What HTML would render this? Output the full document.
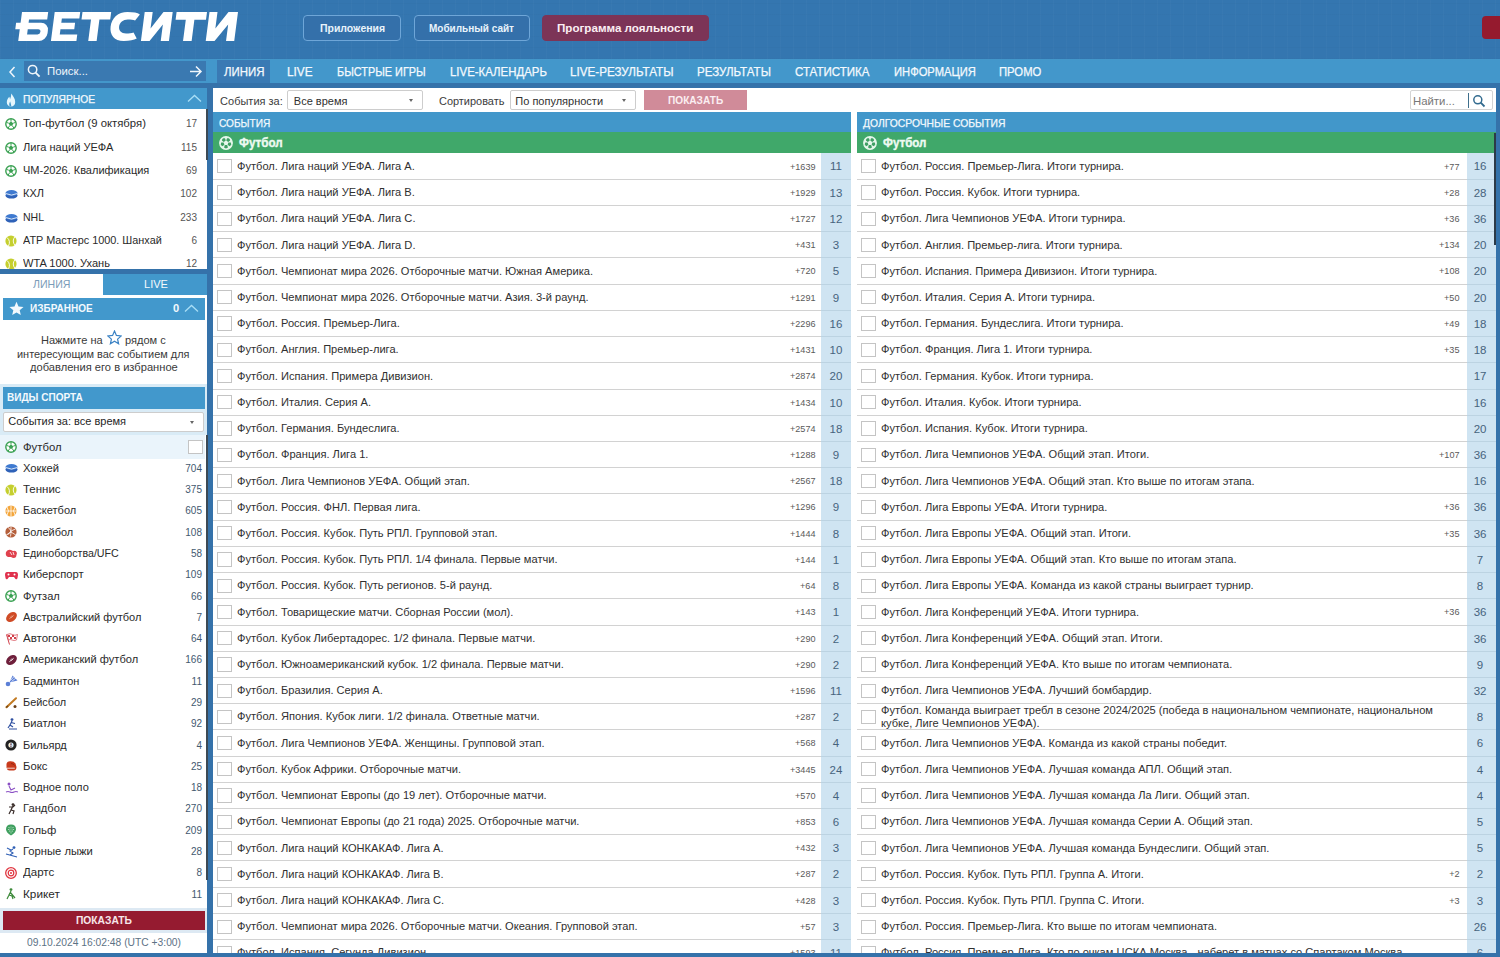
<!DOCTYPE html><html lang="ru"><head><meta charset="utf-8"><title>БЕТСИТИ</title><style>
*{margin:0;padding:0;box-sizing:border-box}
html,body{width:1500px;height:957px;overflow:hidden}
body{position:relative;background:#3572aa;font-family:"Liberation Sans",sans-serif;color:#333}
.a{position:absolute}
.tx{white-space:nowrap;transform-origin:0 50%}
#hdr{left:0;top:0;width:1500px;height:59px;background:#3476b0;background-image:repeating-linear-gradient(90deg,rgba(255,255,255,0.02) 0 1px,transparent 1px 13px),repeating-linear-gradient(0deg,rgba(0,0,0,0.015) 0 1px,transparent 1px 11px)}
.hb{top:15px;height:25.6px;border:1px solid #6ea6d8;border-radius:4px;background:#3470aa}
#nav{left:0;top:59px;width:1500px;height:24px;background:#4397cb}
.sh{background:#4298cc}
.pi{position:absolute;left:0;width:207px;height:23.3px}
.pi svg{position:absolute;left:5px;top:6px}
.pi .n{position:absolute;left:23px;top:0;line-height:23.3px;font-size:11.1px;color:#2a2a2a;white-space:nowrap;transform-origin:0 50%}
.pi .k{position:absolute;right:10px;top:0;line-height:23.3px;font-size:10px;color:#555}
.si{position:absolute;left:0;width:205px;height:21.29px}
.si svg{position:absolute;left:5px;top:4.6px}
.si .n{position:absolute;left:22.7px;top:0;line-height:21.29px;font-size:11.1px;color:#2a2a2a;white-space:nowrap;transform-origin:0 50%}
.si .k{position:absolute;right:3px;top:0;line-height:21.29px;font-size:10px;color:#43596f}
.sel{height:19.8px;border:1px solid #cdcdcd;border-radius:2px;background:#fff}
.sel:after{content:"";position:absolute;right:9px;top:8px;border-left:2.5px solid transparent;border-right:2.5px solid transparent;border-top:3px solid #666}
.col{top:112.4px;height:841px;overflow:hidden;background:#fff}
.ch{height:19.7px;background:#4297ca}
.cg{height:20.7px;background:#40a86a;position:relative}
.cg svg{position:absolute;left:6px;top:4px}
.rows{position:relative;padding-top:0.8px}
.row{position:relative;height:26.23px;border-bottom:1px solid #d2d2d2;white-space:nowrap}
.row .cb{position:absolute;left:4px;top:5.6px;width:14.6px;height:14.2px;border:1px solid #c4c4c4;background:#fff}
.row .t{position:absolute;left:24px;top:-0.7px;line-height:26px;font-size:11.1px;color:#303030}
.row.ml .t{line-height:12.9px;top:0.2px}
.row .p{position:absolute;right:35.5px;top:0;line-height:26px;font-size:9.1px;color:#5a5a5a}
.row .c{position:absolute;right:0;top:0;width:30px;height:25.23px;background:#cfe4f2;text-align:center;line-height:26.5px;font-size:11.5px;color:#46637d}
.row:first-child .c{top:-0.8px;height:26.03px}
.row .c:after{content:'';position:absolute;left:0;right:0;bottom:-1px;height:1px;background:#bcd3e2}
.rc .row .c{width:29.5px;padding-right:2.4px}
.rc .row .p{right:36.5px}
</style></head><body>
<div id="hdr" class="a"></div>
<svg class="a" style="left:0;top:12px;overflow:visible" width="250" height="30" viewBox="0 0 250 30"><g transform="skewX(-7.4)" fill="#fff"><path d="M22 0H48.2V7.6H30V10.8H42.5A7.8 7.8 0 0 1 50.3 18.6V21.2A7.8 7.8 0 0 1 42.5 29H22ZM30 17.2V22.4H40.4A2.6 2.6 0 0 0 40.4 17.2Z" fill-rule="evenodd"/><rect x="17.5" y="10.8" width="10" height="6.4"/><path d="M54.7 0H80.2V6.4H62.7V10.8H76.5V17.2H62.7V22.6H80.2V29H54.7Z"/><path d="M82.5 0H111.2V7.6H100.4V29H92V7.6H82.5Z"/><path d="M140.2 2.4C137.5 0.8 133.5 0 127.5 0C118 0 112.5 6 112.5 14.5C112.5 23 118 29 127.5 29C133.5 29 137.5 28.2 140.2 26.6L136.2 20.4C134.2 21.1 132 21.4 128.8 21.4C124 21.4 121 18.5 121 14.5C121 10.5 124 7.6 128.8 7.6C132 7.6 134.2 7.9 136.2 8.6Z"/><path d="M144.7 0H152.7V16.5L163.5 0H172.7V29H164.5V12.5L153.3 29H144.7Z"/><path d="M176.6 0H207V7.8H195.4V29H186.8V7.8H176.6Z"/><path d="M209.5 0H217.5V16.5L228.5 0H238V29H229.8V12.5L218.3 29H209.5Z"/></g></svg>
<div class="a hb" style="left:303px;width:98px"></div>
<div class="a hb" style="left:413.5px;width:116.5px"></div>
<div class="a hb" style="left:542px;width:166.5px;background:#7c3457;border-color:#7c3457"></div>
<div class="a tx" style="left:319.50px;top:22.77px;font-size:11.5px;line-height:11.5px;color:#e9f3fb;font-weight:bold;transform:scaleX(0.9103);">Приложения</div>
<div class="a tx" style="left:428.50px;top:22.93px;font-size:11.3px;line-height:11.3px;color:#e9f3fb;font-weight:bold;transform:scaleX(0.8846);">Мобильный сайт</div>
<div class="a tx" style="left:557.00px;top:22.67px;font-size:11.5px;line-height:11.5px;color:#fbeef3;font-weight:bold;transform:scaleX(1.0095);">Программа лояльности</div>
<div class="a" style="left:1482px;top:16.3px;width:30px;height:23.2px;background:#951a2e;border-radius:4px"></div>
<div id="nav" class="a"></div>
<div class="a" style="left:217.3px;top:60px;width:52.3px;height:23px;background:#3a7ab4"></div>
<div class="a" style="left:24px;top:61px;width:182px;height:19.7px;background:#3a79b1"></div>
<svg class="a" style="left:7.5px;top:65.5px" width="9" height="12" viewBox="0 0 9 12"><path d="M6.5 1L2 6l4.5 5" stroke="#f0f6fb" stroke-width="1.5" fill="none"/></svg>
<svg class="a" style="left:27px;top:64px" width="14" height="14" viewBox="0 0 14 14"><circle cx="5.6" cy="5.6" r="4.2" stroke="#f0f6fb" stroke-width="1.5" fill="none"/><path d="M8.6 8.6l4 4" stroke="#f0f6fb" stroke-width="1.8"/></svg>
<div class="a tx" style="left:47.20px;top:65.87px;font-size:11.5px;line-height:11.5px;color:#f0f6fb;font-weight:normal;transform:scaleX(0.9891);">Поиск...</div>
<svg class="a" style="left:189px;top:65px" width="14" height="13" viewBox="0 0 14 13"><path d="M1 6.5h11M7 1.5l5 5-5 5" stroke="#f0f6fb" stroke-width="1.5" fill="none"/></svg>
<div class="a tx" style="left:223.50px;top:65.84px;font-size:12px;line-height:12px;color:#f4f9fd;font-weight:normal;transform:scaleX(0.9536);-webkit-text-stroke:0.25px #f4f9fd;">ЛИНИЯ</div>
<div class="a tx" style="left:287.10px;top:65.84px;font-size:12px;line-height:12px;color:#f4f9fd;font-weight:normal;transform:scaleX(0.9840);-webkit-text-stroke:0.25px #f4f9fd;">LIVE</div>
<div class="a tx" style="left:337.00px;top:65.84px;font-size:12px;line-height:12px;color:#f4f9fd;font-weight:normal;transform:scaleX(0.9068);-webkit-text-stroke:0.25px #f4f9fd;">БЫСТРЫЕ ИГРЫ</div>
<div class="a tx" style="left:449.50px;top:65.84px;font-size:12px;line-height:12px;color:#f4f9fd;font-weight:normal;transform:scaleX(0.9516);-webkit-text-stroke:0.25px #f4f9fd;">LIVE-КАЛЕНДАРЬ</div>
<div class="a tx" style="left:570.20px;top:65.84px;font-size:12px;line-height:12px;color:#f4f9fd;font-weight:normal;transform:scaleX(0.9710);-webkit-text-stroke:0.25px #f4f9fd;">LIVE-РЕЗУЛЬТАТЫ</div>
<div class="a tx" style="left:697.20px;top:65.84px;font-size:12px;line-height:12px;color:#f4f9fd;font-weight:normal;transform:scaleX(0.9648);-webkit-text-stroke:0.25px #f4f9fd;">РЕЗУЛЬТАТЫ</div>
<div class="a tx" style="left:795.20px;top:65.84px;font-size:12px;line-height:12px;color:#f4f9fd;font-weight:normal;transform:scaleX(0.9621);-webkit-text-stroke:0.25px #f4f9fd;">СТАТИСТИКА</div>
<div class="a tx" style="left:893.50px;top:65.84px;font-size:12px;line-height:12px;color:#f4f9fd;font-weight:normal;transform:scaleX(0.9328);-webkit-text-stroke:0.25px #f4f9fd;">ИНФОРМАЦИЯ</div>
<div class="a tx" style="left:998.80px;top:65.84px;font-size:12px;line-height:12px;color:#f4f9fd;font-weight:normal;transform:scaleX(0.9393);-webkit-text-stroke:0.25px #f4f9fd;">ПРОМО</div>
<div class="a" style="left:0;top:88px;width:207px;height:865px;background:#fff"></div>
<div class="a sh" style="left:0;top:88px;width:207px;height:21.3px"></div>
<svg class="a" style="left:6.2px;top:92.6px" width="10" height="14" viewBox="0 0 10 14"><path d="M5.3 0.5C7 3 9.2 5.5 9.2 9C9.2 11.8 7.5 13.5 5 13.5C2.5 13.5 0.8 11.8 0.8 9.2C0.8 6.8 2.2 5.2 3.3 3.8C3.8 5 4 5.8 4 6.5C4.8 4.5 5.3 2.5 5.3 0.5Z" fill="#e6f7fd"/><path d="M3.7 13.3C2.9 12 3.1 10 4.2 8.4C4.6 10 5.3 11.5 5.3 13.4Z" fill="#4298cc"/></svg>
<div class="a tx" style="left:23.00px;top:94.53px;font-size:10px;line-height:10px;color:#f3f9fd;font-weight:normal;transform:scaleX(1.0240);-webkit-text-stroke:0.25px #f3f9fd;">ПОПУЛЯРНОЕ</div>
<svg class="a" style="left:187.3px;top:94.3px" width="15" height="9" viewBox="0 0 15 9"><path d="M1 7.5L7.5 1.5 14 7.5" stroke="#a8def6" stroke-width="1.3" fill="none"/></svg>
<div class="pi" style="top:112.30px"><svg width="12" height="12" viewBox="0 0 12 12"><circle cx="6" cy="6" r="5.2" fill="#fff" stroke="#3aa152" stroke-width="1.4"/><path d="M6 3.6L8.2 5.2 7.4 7.8H4.6L3.8 5.2Z" fill="#3aa152"/><path d="M6 1v2.6M8.2 5.2l2.4-.8M7.4 7.8l1.4 2.2M4.6 7.8l-1.4 2.2M3.8 5.2l-2.4-.8" stroke="#3aa152" stroke-width="1"/></svg><span class="n" style="transform:scaleX(1.0197)">Топ-футбол (9 октября)</span><span class="k">17</span></div>
<div class="pi" style="top:135.60px"><svg width="12" height="12" viewBox="0 0 12 12"><circle cx="6" cy="6" r="5.2" fill="#fff" stroke="#3aa152" stroke-width="1.4"/><path d="M6 3.6L8.2 5.2 7.4 7.8H4.6L3.8 5.2Z" fill="#3aa152"/><path d="M6 1v2.6M8.2 5.2l2.4-.8M7.4 7.8l1.4 2.2M4.6 7.8l-1.4 2.2M3.8 5.2l-2.4-.8" stroke="#3aa152" stroke-width="1"/></svg><span class="n" style="transform:scaleX(0.9956)">Лига наций УЕФА</span><span class="k">115</span></div>
<div class="pi" style="top:158.90px"><svg width="12" height="12" viewBox="0 0 12 12"><circle cx="6" cy="6" r="5.2" fill="#fff" stroke="#3aa152" stroke-width="1.4"/><path d="M6 3.6L8.2 5.2 7.4 7.8H4.6L3.8 5.2Z" fill="#3aa152"/><path d="M6 1v2.6M8.2 5.2l2.4-.8M7.4 7.8l1.4 2.2M4.6 7.8l-1.4 2.2M3.8 5.2l-2.4-.8" stroke="#3aa152" stroke-width="1"/></svg><span class="n" style="transform:scaleX(0.9913)">ЧМ-2026. Квалификация</span><span class="k">69</span></div>
<div class="pi" style="top:182.20px"><svg width="13" height="12" viewBox="0 0 13 12"><ellipse cx="6.5" cy="7.4" rx="6" ry="3.2" fill="#2f62b8"/><ellipse cx="6.5" cy="5" rx="6" ry="3" fill="#3f7ad0"/><path d="M1 5.6q5.5 3 11 0" stroke="#fff" stroke-width=".8" fill="none"/></svg><span class="n" style="transform:scaleX(0.9879)">КХЛ</span><span class="k">102</span></div>
<div class="pi" style="top:205.50px"><svg width="13" height="12" viewBox="0 0 13 12"><ellipse cx="6.5" cy="7.4" rx="6" ry="3.2" fill="#2f62b8"/><ellipse cx="6.5" cy="5" rx="6" ry="3" fill="#3f7ad0"/><path d="M1 5.6q5.5 3 11 0" stroke="#fff" stroke-width=".8" fill="none"/></svg><span class="n" style="transform:scaleX(0.9500)">NHL</span><span class="k">233</span></div>
<div class="pi" style="top:228.80px"><svg width="12" height="12" viewBox="0 0 12 12"><circle cx="6" cy="6" r="5.6" fill="#c5cf2e"/><path d="M2 2.5q4 3.5 1.5 8.5M10 1.5q-3.5 4.5 0 9" stroke="#fff" stroke-width=".9" fill="none"/></svg><span class="n" style="transform:scaleX(0.9792)">ATP Мастерс 1000. Шанхай</span><span class="k">6</span></div>
<div class="pi" style="top:252.10px"><svg width="12" height="12" viewBox="0 0 12 12"><circle cx="6" cy="6" r="5.6" fill="#c5cf2e"/><path d="M2 2.5q4 3.5 1.5 8.5M10 1.5q-3.5 4.5 0 9" stroke="#fff" stroke-width=".9" fill="none"/></svg><span class="n" style="transform:scaleX(0.9978)">WTA 1000. Ухань</span><span class="k">12</span></div>
<div class="a" style="left:205.5px;top:109px;width:2px;height:51px;background:#3d4a55"></div>
<div class="a" style="left:0;top:268.6px;width:207px;height:5px;background:#3572aa"></div>
<div class="a" style="left:103.2px;top:273.6px;width:104px;height:21px;background:#4298cc"></div>
<div class="a tx" style="left:32.50px;top:278.86px;font-size:10.8px;line-height:10.8px;color:#7a9cb8;font-weight:normal;transform:scaleX(0.9790);">ЛИНИЯ</div>
<div class="a tx" style="left:143.50px;top:278.86px;font-size:10.8px;line-height:10.8px;color:#f5fafd;font-weight:normal;transform:scaleX(1.0204);">LIVE</div>
<div class="a sh" style="left:3px;top:298px;width:201.5px;height:21.5px"></div>
<svg class="a" style="left:9px;top:301px" width="15" height="15" viewBox="0 0 15 15"><path d="M7.5 0.8l2 4.6 5 .5-3.8 3.3 1.1 4.9-4.3-2.6-4.3 2.6 1.1-4.9L.5 5.9l5-.5Z" fill="#f3f9fd"/></svg>
<div class="a tx" style="left:29.50px;top:303.16px;font-size:10.8px;line-height:10.8px;color:#f3f9fd;font-weight:bold;transform:scaleX(0.9270);">ИЗБРАННОЕ</div>
<div class="a tx" style="left:173.20px;top:303.16px;font-size:10.8px;line-height:10.8px;color:#f3f9fd;font-weight:bold;transform:scaleX(1.0306);">0</div>
<svg class="a" style="left:184px;top:303.8px" width="15" height="9" viewBox="0 0 15 9"><path d="M1 7.5L7.5 1.5 14 7.5" stroke="#a8def6" stroke-width="1.3" fill="none"/></svg>
<div class="a tx" style="left:41.20px;top:334.77px;font-size:10.9px;line-height:10.9px;color:#3a3a3a;font-weight:normal;transform:scaleX(1.0146);">Нажмите на</div>
<svg class="a" style="left:107px;top:329.5px" width="15" height="15" viewBox="0 0 15 15"><path d="M7.5 1l1.9 4.4 4.8.5-3.6 3.2 1 4.7-4.1-2.5-4.1 2.5 1-4.7L.8 5.9l4.8-.5Z" fill="none" stroke="#3a82c4" stroke-width="1.2"/></svg>
<div class="a tx" style="left:124.80px;top:334.77px;font-size:10.9px;line-height:10.9px;color:#3a3a3a;font-weight:normal;transform:scaleX(1.0148);">рядом с</div>
<div class="a tx" style="left:17.10px;top:348.97px;font-size:10.9px;line-height:10.9px;color:#3a3a3a;font-weight:normal;transform:scaleX(1.0035);">интересующим вас событием для</div>
<div class="a tx" style="left:29.80px;top:361.67px;font-size:10.9px;line-height:10.9px;color:#3a3a3a;font-weight:normal;transform:scaleX(1.0224);">добавления его в избранное</div>
<div class="a" style="left:0;top:384px;width:207px;height:50.8px;background:#d9ebf6"></div>
<div class="a sh" style="left:3px;top:387px;width:201.5px;height:21.5px"></div>
<div class="a tx" style="left:6.50px;top:392.06px;font-size:10.8px;line-height:10.8px;color:#f3f9fd;font-weight:bold;transform:scaleX(0.9295);">ВИДЫ СПОРТА</div>
<div class="a sel" style="left:3.2px;top:412px;width:201.3px;height:19.5px"></div>
<div class="a tx" style="left:8.30px;top:415.99px;font-size:11px;line-height:11px;color:#262626;font-weight:normal;">События за: все время</div>
<div class="a" style="left:0;top:434.8px;width:205px;height:24.5px;background:#eaf4fb"></div>
<div class="si" style="top:436.50px"><svg width="12" height="12" viewBox="0 0 12 12"><circle cx="6" cy="6" r="5.2" fill="#fff" stroke="#3aa152" stroke-width="1.4"/><path d="M6 3.6L8.2 5.2 7.4 7.8H4.6L3.8 5.2Z" fill="#3aa152"/><path d="M6 1v2.6M8.2 5.2l2.4-.8M7.4 7.8l1.4 2.2M4.6 7.8l-1.4 2.2M3.8 5.2l-2.4-.8" stroke="#3aa152" stroke-width="1"/></svg><span class="n" style="transform:scaleX(1.0204)">Футбол</span><span class="k"></span></div>
<div class="si" style="top:457.79px"><svg width="13" height="12" viewBox="0 0 13 12"><ellipse cx="6.5" cy="7.4" rx="6" ry="3.2" fill="#2f62b8"/><ellipse cx="6.5" cy="5" rx="6" ry="3" fill="#3f7ad0"/><path d="M1 5.6q5.5 3 11 0" stroke="#fff" stroke-width=".8" fill="none"/></svg><span class="n" style="transform:scaleX(1.0124)">Хоккей</span><span class="k">704</span></div>
<div class="si" style="top:479.08px"><svg width="12" height="12" viewBox="0 0 12 12"><circle cx="6" cy="6" r="5.6" fill="#c5cf2e"/><path d="M2 2.5q4 3.5 1.5 8.5M10 1.5q-3.5 4.5 0 9" stroke="#fff" stroke-width=".9" fill="none"/></svg><span class="n" style="transform:scaleX(1.0350)">Теннис</span><span class="k">375</span></div>
<div class="si" style="top:500.37px"><svg width="12" height="12" viewBox="0 0 12 12"><circle cx="6" cy="6" r="5.6" fill="#f3a53a"/><path d="M6 .5v11M.5 6h11M2 2q3 4 0 8M10 2q-3 4 0 8" stroke="#fff" stroke-width=".8" fill="none"/></svg><span class="n" style="transform:scaleX(0.9921)">Баскетбол</span><span class="k">605</span></div>
<div class="si" style="top:521.66px"><svg width="12" height="12" viewBox="0 0 12 12"><circle cx="6" cy="6" r="5.6" fill="#b5603c"/><path d="M6 6L6 .5M6 6l4.8 3M6 6L1.2 9M3 1.5q4 2 2.5 9M10.5 3q-4 .5-8 6" stroke="#fff" stroke-width=".8" fill="none"/></svg><span class="n" style="transform:scaleX(0.9839)">Волейбол</span><span class="k">108</span></div>
<div class="si" style="top:542.95px"><svg width="13" height="12" viewBox="0 0 13 12"><path d="M1 4q2-3 5-2l2 1q3-1 4 2l-1 4q-2 2-5 0L3 9Q0 8 1 4Z" fill="#e0424e"/><path d="M5 4l2 3M8 4l1 3" stroke="#fff" stroke-width=".8"/></svg><span class="n" style="transform:scaleX(0.9627)">Единоборства/UFC</span><span class="k">58</span></div>
<div class="si" style="top:564.24px"><svg width="13" height="12" viewBox="0 0 13 12"><path d="M2 3h9q2 0 2 3l-.5 3q-.5 2-2 1L9 8H4L2.5 10Q1 11 .5 9L0 6q0-3 2-3Z" fill="#e0314d"/><circle cx="3.5" cy="5.5" r="1" fill="#fff"/><circle cx="9.5" cy="5.5" r="1" fill="#fff"/></svg><span class="n" style="transform:scaleX(1.0122)">Киберспорт</span><span class="k">109</span></div>
<div class="si" style="top:585.53px"><svg width="12" height="12" viewBox="0 0 12 12"><circle cx="6" cy="6" r="5.2" fill="#fff" stroke="#3aa152" stroke-width="1.4"/><path d="M6 3.6L8.2 5.2 7.4 7.8H4.6L3.8 5.2Z" fill="#3aa152"/><path d="M6 1v2.6M8.2 5.2l2.4-.8M7.4 7.8l1.4 2.2M4.6 7.8l-1.4 2.2M3.8 5.2l-2.4-.8" stroke="#3aa152" stroke-width="1"/></svg><span class="n" style="transform:scaleX(1.0001)">Футзал</span><span class="k">66</span></div>
<div class="si" style="top:606.82px"><svg width="13" height="12" viewBox="0 0 13 12"><ellipse cx="6.5" cy="6" rx="6" ry="4.3" transform="rotate(-40 6.5 6)" fill="#cf4b26"/><path d="M4.3 7.8l4.4-3.6M5.4 5.6l1.2 1.3M6.6 4.7l1.2 1.3" stroke="#f2c0a8" stroke-width=".7"/></svg><span class="n" style="transform:scaleX(0.9927)">Австралийский футбол</span><span class="k">7</span></div>
<div class="si" style="top:628.11px"><svg width="13" height="12" viewBox="0 0 13 12"><path d="M1.5 1.5L4.5 11.5" stroke="#d2414c" stroke-width="1"/><path d="M2 1.5Q5 0 7.5 1.5T12.5 1.5L11.5 7Q9 8 7 7T3.5 7Z" fill="#fff" stroke="#d2414c" stroke-width=".7"/><path d="M3 2h2v2H3zM7 2h2v2H7zM5 4h2v2H5zM9 4h2v2H9z" fill="#d2414c"/></svg><span class="n" style="transform:scaleX(1.0365)">Автогонки</span><span class="k">64</span></div>
<div class="si" style="top:649.40px"><svg width="13" height="12" viewBox="0 0 13 12"><ellipse cx="6.5" cy="6" rx="6" ry="4.3" transform="rotate(-40 6.5 6)" fill="#6e1f3b"/><path d="M4.3 7.8l4.4-3.6M5.4 5.6l1.2 1.3M6.6 4.7l1.2 1.3" stroke="#fff" stroke-width=".8"/></svg><span class="n" style="transform:scaleX(0.9998)">Американский футбол</span><span class="k">166</span></div>
<div class="si" style="top:670.69px"><svg width="13" height="12" viewBox="0 0 13 12"><path d="M4.5 7.5L7.5 0.5 12.5 5.5Z" fill="#5b7fd6"/><path d="M5.5 5.5L9 1.6M6.5 6.5L11 3" stroke="#fff" stroke-width=".7"/><circle cx="3" cy="9" r="2.3" fill="#5b7fd6"/></svg><span class="n" style="transform:scaleX(0.9870)">Бадминтон</span><span class="k">11</span></div>
<div class="si" style="top:691.98px"><svg width="13" height="12" viewBox="0 0 13 12"><path d="M1.5 10.2L11 1.2" stroke="#c27a22" stroke-width="2" stroke-linecap="round"/><path d="M1.2 10.5L3 8.8" stroke="#7a4a14" stroke-width="1.6"/><circle cx="10" cy="9.6" r="1.5" fill="#6b3f16"/></svg><span class="n" style="transform:scaleX(0.9829)">Бейсбол</span><span class="k">29</span></div>
<div class="si" style="top:713.27px"><svg width="13" height="12" viewBox="0 0 13 12"><circle cx="7" cy="1.6" r="1.4" fill="#2d4fa0"/><path d="M7 3L5 7l3 2M6 4.5l4 1M4 11h8M5 7l-2 3" stroke="#2d4fa0" stroke-width="1.2" fill="none"/></svg><span class="n" style="transform:scaleX(1.0014)">Биатлон</span><span class="k">92</span></div>
<div class="si" style="top:734.56px"><svg width="12" height="12" viewBox="0 0 12 12"><circle cx="6" cy="6" r="5.6" fill="#222"/><circle cx="6" cy="6" r="2.6" fill="#fff"/><text x="6" y="8" font-size="4.5" text-anchor="middle" fill="#222" font-family="Liberation Sans">8</text></svg><span class="n" style="transform:scaleX(0.9923)">Бильярд</span><span class="k">4</span></div>
<div class="si" style="top:755.85px"><svg width="13" height="12" viewBox="0 0 13 12"><path d="M1.5 5.5Q1 1.5 5 1.2T10.5 3.5L11.5 7Q11.5 10 9 10.5H4.5Q1.8 10.2 1.5 7.5Z" fill="#c83a1c"/><path d="M2 8.2H9.8" stroke="#fff" stroke-width=".8"/><path d="M6 3.5Q8.5 3.5 9.5 5.5" stroke="#8e240f" stroke-width=".8" fill="none"/></svg><span class="n" style="transform:scaleX(1.0173)">Бокс</span><span class="k">25</span></div>
<div class="si" style="top:777.14px"><svg width="13" height="12" viewBox="0 0 13 12"><circle cx="4" cy="2" r="1.5" fill="#8a4fc4"/><path d="M4 4l2 4 4-2M1 10q2-1 4 0t4 0 4 0" stroke="#8a4fc4" stroke-width="1.1" fill="none"/></svg><span class="n" style="transform:scaleX(0.9960)">Водное поло</span><span class="k">18</span></div>
<div class="si" style="top:798.43px"><svg width="13" height="12" viewBox="0 0 13 12"><circle cx="8" cy="1.6" r="1.4" fill="#3a2d2a"/><path d="M8 3L6 7l3 1-1 3M6 7l-2 4M4 4h4l2-2" stroke="#3a2d2a" stroke-width="1.2" fill="none"/></svg><span class="n" style="transform:scaleX(1.0065)">Гандбол</span><span class="k">270</span></div>
<div class="si" style="top:819.72px"><svg width="12" height="12" viewBox="0 0 12 12"><path d="M6 .6Q11 .8 11 5.3 11 8.5 6 11.6 1 8.5 1 5.3 1 .8 6 .6Z" fill="#3f9f5f"/><g fill="#bfe6cb"><circle cx="4" cy="3.5" r=".6"/><circle cx="6" cy="3" r=".6"/><circle cx="8" cy="3.5" r=".6"/><circle cx="3.5" cy="5.5" r=".6"/><circle cx="5" cy="5" r=".6"/><circle cx="7" cy="5" r=".6"/><circle cx="8.5" cy="5.5" r=".6"/><circle cx="4.5" cy="7" r=".6"/><circle cx="6" cy="7" r=".6"/><circle cx="7.5" cy="7" r=".6"/><circle cx="6" cy="8.8" r=".6"/></g></svg><span class="n" style="transform:scaleX(1.0191)">Гольф</span><span class="k">209</span></div>
<div class="si" style="top:841.01px"><svg width="13" height="12" viewBox="0 0 13 12"><circle cx="9" cy="1.6" r="1.4" fill="#2f5fb5"/><path d="M8 3L5 5l3 2-3 2M1 8l11 3M2 2l4 2" stroke="#2f5fb5" stroke-width="1.1" fill="none"/></svg><span class="n" style="transform:scaleX(1.0111)">Горные лыжи</span><span class="k">28</span></div>
<div class="si" style="top:862.30px"><svg width="12" height="12" viewBox="0 0 12 12"><circle cx="6" cy="6" r="5.3" fill="none" stroke="#e0353f" stroke-width="1.3"/><circle cx="6" cy="6" r="2.8" fill="none" stroke="#e0353f" stroke-width="1.2"/><circle cx="6" cy="6" r="1" fill="#e0353f"/></svg><span class="n" style="transform:scaleX(1.0390)">Дартс</span><span class="k">8</span></div>
<div class="si" style="top:883.59px"><svg width="13" height="12" viewBox="0 0 13 12"><circle cx="6" cy="1.6" r="1.4" fill="#3d8a3a"/><path d="M6 3L4 7l3 1 1 3M4 7l-2 4M5 4l5 6" stroke="#3d8a3a" stroke-width="1.2" fill="none"/></svg><span class="n" style="transform:scaleX(1.0600)">Крикет</span><span class="k">11</span></div>
<div class="a" style="left:188.4px;top:440.2px;width:14.2px;height:14.2px;border:1px solid #c4c4c4;background:#fff"></div>
<div class="a" style="left:205.5px;top:435px;width:2px;height:445px;background:#3d4a55"></div>
<div class="a" style="left:0;top:908px;width:207px;height:25px;background:#dde9f3"></div>
<div class="a" style="left:3px;top:911.3px;width:201.7px;height:18.6px;background:#951b30"></div>
<div class="a tx" style="left:75.50px;top:915.47px;font-size:11.5px;line-height:11.5px;color:#f6e6ea;font-weight:bold;transform:scaleX(0.8922);">ПОКАЗАТЬ</div>
<div class="a tx" style="left:26.70px;top:938.07px;font-size:10.2px;line-height:10.2px;color:#5d7285;font-weight:normal;transform:scaleX(1.0089);">09.10.2024 16:02:48 (UTC +3:00)</div>
<div class="a" style="left:213px;top:88px;width:1283px;height:865px;background:#fff"></div>
<div class="a tx" style="left:220.10px;top:95.79px;font-size:11px;line-height:11px;color:#3c3c3c;font-weight:normal;">События за:</div>
<div class="a sel" style="left:287.3px;top:90.4px;width:135.4px"></div>
<div class="a tx" style="left:293.80px;top:95.79px;font-size:11px;line-height:11px;color:#303030;font-weight:normal;">Все время</div>
<div class="a tx" style="left:438.70px;top:95.79px;font-size:11px;line-height:11px;color:#3c3c3c;font-weight:normal;transform:scaleX(0.9949);">Сортировать</div>
<div class="a sel" style="left:509.6px;top:90.4px;width:126.1px"></div>
<div class="a tx" style="left:515.30px;top:95.79px;font-size:11px;line-height:11px;color:#303030;font-weight:normal;">По популярности</div>
<div class="a" style="left:644px;top:90.4px;width:102.8px;height:19.4px;background:#d08b99"></div>
<div class="a tx" style="left:667.80px;top:95.39px;font-size:11px;line-height:11px;color:#fbeef1;font-weight:bold;transform:scaleX(0.9193);">ПОКАЗАТЬ</div>
<div class="a" style="left:1410px;top:90.3px;width:82.6px;height:20px;border:1px solid #d4d4d4;border-radius:2px;background:#fff"></div>
<div class="a tx" style="left:1413.40px;top:95.53px;font-size:11.3px;line-height:11.3px;color:#777;font-weight:normal;transform:scaleX(1.0059);">Найти...</div>
<div class="a" style="left:1468px;top:93px;width:1.2px;height:15px;background:#3f6f8c"></div>
<svg class="a" style="left:1472px;top:93.5px" width="14" height="14" viewBox="0 0 14 14"><circle cx="5.8" cy="5.8" r="4" stroke="#336b8f" stroke-width="1.5" fill="none"/><path d="M8.7 8.7l3.8 3.8" stroke="#336b8f" stroke-width="1.8"/></svg>
<div class="a col" style="left:213px;width:638px"><div class="ch"></div><div class="cg"><svg width="14" height="14" viewBox="0 0 14 14"><circle cx="7" cy="7" r="6.3" fill="#e6f7ec"/><path d="M10.41 2.31L11.15 4.60L9.20 6.02L7.25 4.60L8.00 2.31ZM12.52 8.79L10.57 10.21L8.62 8.79L9.36 6.50L11.77 6.50ZM7.00 12.80L5.05 11.38L5.80 9.09L8.20 9.09L8.95 11.38ZM1.48 8.79L2.23 6.50L4.64 6.50L5.38 8.79L3.43 10.21ZM3.59 2.31L6.00 2.31L6.75 4.60L4.80 6.02L2.85 4.60Z" fill="#3f9f64"/><circle cx="7" cy="7" r="6.3" fill="none" stroke="#e6f7ec" stroke-width="1.2"/></svg></div><div class="rows"><div class="row"><i class="cb"></i><span class="t">Футбол. Лига наций УЕФА. Лига А.</span><span class="p">+1639</span><span class="c">11</span></div>
<div class="row"><i class="cb"></i><span class="t">Футбол. Лига наций УЕФА. Лига B.</span><span class="p">+1929</span><span class="c">13</span></div>
<div class="row"><i class="cb"></i><span class="t">Футбол. Лига наций УЕФА. Лига C.</span><span class="p">+1727</span><span class="c">12</span></div>
<div class="row"><i class="cb"></i><span class="t">Футбол. Лига наций УЕФА. Лига D.</span><span class="p">+431</span><span class="c">3</span></div>
<div class="row"><i class="cb"></i><span class="t">Футбол. Чемпионат мира 2026. Отборочные матчи. Южная Америка.</span><span class="p">+720</span><span class="c">5</span></div>
<div class="row"><i class="cb"></i><span class="t">Футбол. Чемпионат мира 2026. Отборочные матчи. Азия. 3-й раунд.</span><span class="p">+1291</span><span class="c">9</span></div>
<div class="row"><i class="cb"></i><span class="t">Футбол. Россия. Премьер-Лига.</span><span class="p">+2296</span><span class="c">16</span></div>
<div class="row"><i class="cb"></i><span class="t">Футбол. Англия. Премьер-лига.</span><span class="p">+1431</span><span class="c">10</span></div>
<div class="row"><i class="cb"></i><span class="t">Футбол. Испания. Примера Дивизион.</span><span class="p">+2874</span><span class="c">20</span></div>
<div class="row"><i class="cb"></i><span class="t">Футбол. Италия. Серия А.</span><span class="p">+1434</span><span class="c">10</span></div>
<div class="row"><i class="cb"></i><span class="t">Футбол. Германия. Бундеслига.</span><span class="p">+2574</span><span class="c">18</span></div>
<div class="row"><i class="cb"></i><span class="t">Футбол. Франция. Лига 1.</span><span class="p">+1288</span><span class="c">9</span></div>
<div class="row"><i class="cb"></i><span class="t">Футбол. Лига Чемпионов УЕФА. Общий этап.</span><span class="p">+2567</span><span class="c">18</span></div>
<div class="row"><i class="cb"></i><span class="t">Футбол. Россия. ФНЛ. Первая лига.</span><span class="p">+1296</span><span class="c">9</span></div>
<div class="row"><i class="cb"></i><span class="t">Футбол. Россия. Кубок. Путь РПЛ. Групповой этап.</span><span class="p">+1444</span><span class="c">8</span></div>
<div class="row"><i class="cb"></i><span class="t">Футбол. Россия. Кубок. Путь РПЛ. 1/4 финала. Первые матчи.</span><span class="p">+144</span><span class="c">1</span></div>
<div class="row"><i class="cb"></i><span class="t">Футбол. Россия. Кубок. Путь регионов. 5-й раунд.</span><span class="p">+64</span><span class="c">8</span></div>
<div class="row"><i class="cb"></i><span class="t">Футбол. Товарищеские матчи. Сборная России (мол).</span><span class="p">+143</span><span class="c">1</span></div>
<div class="row"><i class="cb"></i><span class="t">Футбол. Кубок Либертадорес. 1/2 финала. Первые матчи.</span><span class="p">+290</span><span class="c">2</span></div>
<div class="row"><i class="cb"></i><span class="t">Футбол. Южноамериканский кубок. 1/2 финала. Первые матчи.</span><span class="p">+290</span><span class="c">2</span></div>
<div class="row"><i class="cb"></i><span class="t">Футбол. Бразилия. Серия А.</span><span class="p">+1596</span><span class="c">11</span></div>
<div class="row"><i class="cb"></i><span class="t">Футбол. Япония. Кубок лиги. 1/2 финала. Ответные матчи.</span><span class="p">+287</span><span class="c">2</span></div>
<div class="row"><i class="cb"></i><span class="t">Футбол. Лига Чемпионов УЕФА. Женщины. Групповой этап.</span><span class="p">+568</span><span class="c">4</span></div>
<div class="row"><i class="cb"></i><span class="t">Футбол. Кубок Африки. Отборочные матчи.</span><span class="p">+3445</span><span class="c">24</span></div>
<div class="row"><i class="cb"></i><span class="t">Футбол. Чемпионат Европы (до 19 лет). Отборочные матчи.</span><span class="p">+570</span><span class="c">4</span></div>
<div class="row"><i class="cb"></i><span class="t">Футбол. Чемпионат Европы (до 21 года) 2025. Отборочные матчи.</span><span class="p">+853</span><span class="c">6</span></div>
<div class="row"><i class="cb"></i><span class="t">Футбол. Лига наций КОНКАКАФ. Лига А.</span><span class="p">+432</span><span class="c">3</span></div>
<div class="row"><i class="cb"></i><span class="t">Футбол. Лига наций КОНКАКАФ. Лига В.</span><span class="p">+287</span><span class="c">2</span></div>
<div class="row"><i class="cb"></i><span class="t">Футбол. Лига наций КОНКАКАФ. Лига С.</span><span class="p">+428</span><span class="c">3</span></div>
<div class="row"><i class="cb"></i><span class="t">Футбол. Чемпионат мира 2026. Отборочные матчи. Океания. Групповой этап.</span><span class="p">+57</span><span class="c">3</span></div>
<div class="row"><i class="cb"></i><span class="t">Футбол. Испания. Сегунда Дивизион.</span><span class="p">+1593</span><span class="c">11</span></div></div></div>
<div class="a col rc" style="left:857px;width:639px"><div class="ch"></div><div class="cg"><svg width="14" height="14" viewBox="0 0 14 14"><circle cx="7" cy="7" r="6.3" fill="#e6f7ec"/><path d="M10.41 2.31L11.15 4.60L9.20 6.02L7.25 4.60L8.00 2.31ZM12.52 8.79L10.57 10.21L8.62 8.79L9.36 6.50L11.77 6.50ZM7.00 12.80L5.05 11.38L5.80 9.09L8.20 9.09L8.95 11.38ZM1.48 8.79L2.23 6.50L4.64 6.50L5.38 8.79L3.43 10.21ZM3.59 2.31L6.00 2.31L6.75 4.60L4.80 6.02L2.85 4.60Z" fill="#3f9f64"/><circle cx="7" cy="7" r="6.3" fill="none" stroke="#e6f7ec" stroke-width="1.2"/></svg></div><div class="rows"><div class="row"><i class="cb"></i><span class="t">Футбол. Россия. Премьер-Лига. Итоги турнира.</span><span class="p">+77</span><span class="c">16</span></div>
<div class="row"><i class="cb"></i><span class="t">Футбол. Россия. Кубок. Итоги турнира.</span><span class="p">+28</span><span class="c">28</span></div>
<div class="row"><i class="cb"></i><span class="t">Футбол. Лига Чемпионов УЕФА. Итоги турнира.</span><span class="p">+36</span><span class="c">36</span></div>
<div class="row"><i class="cb"></i><span class="t">Футбол. Англия. Премьер-лига. Итоги турнира.</span><span class="p">+134</span><span class="c">20</span></div>
<div class="row"><i class="cb"></i><span class="t">Футбол. Испания. Примера Дивизион. Итоги турнира.</span><span class="p">+108</span><span class="c">20</span></div>
<div class="row"><i class="cb"></i><span class="t">Футбол. Италия. Серия А. Итоги турнира.</span><span class="p">+50</span><span class="c">20</span></div>
<div class="row"><i class="cb"></i><span class="t">Футбол. Германия. Бундеслига. Итоги турнира.</span><span class="p">+49</span><span class="c">18</span></div>
<div class="row"><i class="cb"></i><span class="t">Футбол. Франция. Лига 1. Итоги турнира.</span><span class="p">+35</span><span class="c">18</span></div>
<div class="row"><i class="cb"></i><span class="t">Футбол. Германия. Кубок. Итоги турнира.</span><span class="p"></span><span class="c">17</span></div>
<div class="row"><i class="cb"></i><span class="t">Футбол. Италия. Кубок. Итоги турнира.</span><span class="p"></span><span class="c">16</span></div>
<div class="row"><i class="cb"></i><span class="t">Футбол. Испания. Кубок. Итоги турнира.</span><span class="p"></span><span class="c">20</span></div>
<div class="row"><i class="cb"></i><span class="t">Футбол. Лига Чемпионов УЕФА. Общий этап. Итоги.</span><span class="p">+107</span><span class="c">36</span></div>
<div class="row"><i class="cb"></i><span class="t">Футбол. Лига Чемпионов УЕФА. Общий этап. Кто выше по итогам этапа.</span><span class="p"></span><span class="c">16</span></div>
<div class="row"><i class="cb"></i><span class="t">Футбол. Лига Европы УЕФА. Итоги турнира.</span><span class="p">+36</span><span class="c">36</span></div>
<div class="row"><i class="cb"></i><span class="t">Футбол. Лига Европы УЕФА. Общий этап. Итоги.</span><span class="p">+35</span><span class="c">36</span></div>
<div class="row"><i class="cb"></i><span class="t">Футбол. Лига Европы УЕФА. Общий этап. Кто выше по итогам этапа.</span><span class="p"></span><span class="c">7</span></div>
<div class="row"><i class="cb"></i><span class="t">Футбол. Лига Европы УЕФА. Команда из какой страны выиграет турнир.</span><span class="p"></span><span class="c">8</span></div>
<div class="row"><i class="cb"></i><span class="t">Футбол. Лига Конференций УЕФА. Итоги турнира.</span><span class="p">+36</span><span class="c">36</span></div>
<div class="row"><i class="cb"></i><span class="t">Футбол. Лига Конференций УЕФА. Общий этап. Итоги.</span><span class="p"></span><span class="c">36</span></div>
<div class="row"><i class="cb"></i><span class="t">Футбол. Лига Конференций УЕФА. Кто выше по итогам чемпионата.</span><span class="p"></span><span class="c">9</span></div>
<div class="row"><i class="cb"></i><span class="t">Футбол. Лига Чемпионов УЕФА. Лучший бомбардир.</span><span class="p"></span><span class="c">32</span></div>
<div class="row ml"><i class="cb"></i><span class="t">Футбол. Команда выиграет требл в сезоне 2024/2025 (победа в национальном чемпионате, национальном<br>кубке, Лиге Чемпионов УЕФА).</span><span class="p"></span><span class="c">8</span></div>
<div class="row"><i class="cb"></i><span class="t">Футбол. Лига Чемпионов УЕФА. Команда из какой страны победит.</span><span class="p"></span><span class="c">6</span></div>
<div class="row"><i class="cb"></i><span class="t">Футбол. Лига Чемпионов УЕФА. Лучшая команда АПЛ. Общий этап.</span><span class="p"></span><span class="c">4</span></div>
<div class="row"><i class="cb"></i><span class="t">Футбол. Лига Чемпионов УЕФА. Лучшая команда Ла Лиги. Общий этап.</span><span class="p"></span><span class="c">4</span></div>
<div class="row"><i class="cb"></i><span class="t">Футбол. Лига Чемпионов УЕФА. Лучшая команда Серии А. Общий этап.</span><span class="p"></span><span class="c">5</span></div>
<div class="row"><i class="cb"></i><span class="t">Футбол. Лига Чемпионов УЕФА. Лучшая команда Бундеслиги. Общий этап.</span><span class="p"></span><span class="c">5</span></div>
<div class="row"><i class="cb"></i><span class="t">Футбол. Россия. Кубок. Путь РПЛ. Группа А. Итоги.</span><span class="p">+2</span><span class="c">2</span></div>
<div class="row"><i class="cb"></i><span class="t">Футбол. Россия. Кубок. Путь РПЛ. Группа С. Итоги.</span><span class="p">+3</span><span class="c">3</span></div>
<div class="row"><i class="cb"></i><span class="t">Футбол. Россия. Премьер-Лига. Кто выше по итогам чемпионата.</span><span class="p"></span><span class="c">26</span></div>
<div class="row"><i class="cb"></i><span class="t">Футбол. Россия. Премьер-Лига. Кто по очкам ЦСКА Москва - наберет в матчах со Спартаком Москва.</span><span class="p"></span><span class="c">6</span></div></div></div>
<div class="a tx" style="left:219.20px;top:117.69px;font-size:11px;line-height:11px;color:#f3f9fd;font-weight:normal;transform:scaleX(0.9176);-webkit-text-stroke:0.25px #f3f9fd;">СОБЫТИЯ</div>
<div class="a tx" style="left:238.50px;top:137.14px;font-size:12px;line-height:12px;color:#eefaf2;font-weight:bold;transform:scaleX(0.9686);-webkit-text-stroke:0.35px #eefaf2;">Футбол</div>
<div class="a tx" style="left:863.10px;top:118.09px;font-size:11px;line-height:11px;color:#f3f9fd;font-weight:normal;transform:scaleX(0.9396);-webkit-text-stroke:0.25px #f3f9fd;">ДОЛГОСРОЧНЫЕ СОБЫТИЯ</div>
<div class="a tx" style="left:882.70px;top:137.14px;font-size:12px;line-height:12px;color:#eefaf2;font-weight:bold;transform:scaleX(0.9663);-webkit-text-stroke:0.35px #eefaf2;">Футбол</div>
<div class="a" style="left:1493.6px;top:132.7px;width:2.4px;height:112px;background:#2c3a48"></div>
<div class="a" style="left:0;top:953px;width:1500px;height:4px;background:#3572aa"></div>
</body></html>
